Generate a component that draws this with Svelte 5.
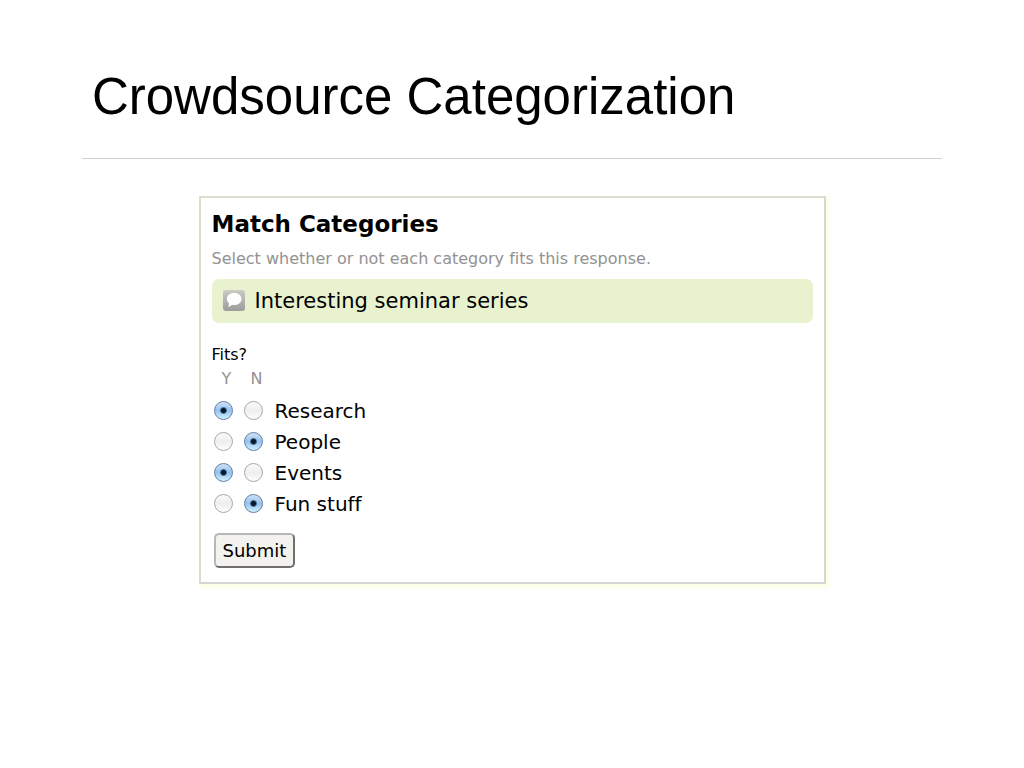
<script>
  let categories = $state([
    { name: 'Research', fits: 'yes' },
    { name: 'People', fits: 'no' },
    { name: 'Events', fits: 'yes' },
    { name: 'Fun stuff', fits: 'no' }
  ]);
</script>

<main>
  <header>
    <h1>Crowdsource Categorization</h1>
  </header>

  <form class="card" onsubmit={(event) => event.preventDefault()}>
    <h2>Match Categories</h2>
    <p class="hint">Select whether or not each category fits this response.</p>

    <div class="response">
      <svg class="bubble" viewBox="0 0 22 22" aria-hidden="true">
        <defs>
          <linearGradient id="tile" x1="0" y1="0" x2="0" y2="1">
            <stop offset="0" stop-color="#c9cbc4" />
            <stop offset="1" stop-color="#9c9c9c" />
          </linearGradient>
        </defs>
        <rect width="22" height="21" rx="3" fill="url(#tile)" />
        <path
          d="M11.200 3c4.300 0 7.300 2.600 7.300 6s-3 6-7.300 6c-.8 0-1.500-.1-2.200-.3-.9 1.200-2.300 1.900-4.100 2.100.9-1 1.200-2.200 1.200-3.500C4.700 12.200 3.900 10.700 3.900 9c0-3.400 3-6 7.300-6z"
          fill="#fff"
        />
      </svg>
      <span>Interesting seminar series</span>
    </div>

    <table>
      <caption>Fits?</caption>
      <thead>
        <tr>
          <th scope="col">Y</th>
          <th scope="col">N</th>
          <td></td>
        </tr>
      </thead>
      <tbody>
        {#each categories as category, i}
          <tr>
            <td>
              <input
                type="radio"
                name="category-{i}"
                value="yes"
                aria-label="{category.name}: yes"
                bind:group={category.fits}
              />
            </td>
            <td>
              <input
                type="radio"
                name="category-{i}"
                value="no"
                aria-label="{category.name}: no"
                bind:group={category.fits}
              />
            </td>
            <th scope="row">{category.name}</th>
          </tr>
        {/each}
      </tbody>
    </table>

    <button type="submit">Submit</button>
  </form>
</main>

<style>
  :global(body) {
    margin: 0;
    background: #fff;
  }

  main {
    padding: 65px 8% 48px;
    color: #000;
    font-family: Verdana, 'DejaVu Sans', sans-serif;
    font-variant-ligatures: none;
  }

  header {
    padding: 0 10px 29px;
    border-bottom: 1px solid #d0d0d0;
  }

  h1 {
    margin: 0;
    font: 400 51px/64px 'Liberation Sans', Arial, sans-serif;
  }

  .card {
    box-sizing: border-box;
    max-width: 627px;
    margin: 37px auto 0;
    padding: 11px 11px 14px;
    border: 2px solid #dcdecf;
    border-right-color: #d4d6d4;
    border-bottom-color: #d4d6d4;
    box-shadow: 2px 2px 0 2px #fdffe9;
  }

  h2 {
    margin: 0;
    font-size: 23px;
    line-height: 30px;
  }

  .hint {
    margin: 8px 0;
    color: #929292;
    font-size: 16px;
    line-height: 24px;
  }

  .response {
    display: flex;
    align-items: center;
    gap: 10px;
    padding: 8px 11px;
    border-radius: 7px;
    background: #e8f2cf;
    font-size: 21px;
    line-height: 28px;
  }

  .bubble {
    width: 22px;
    height: 22px;
  }

  table {
    margin-top: 20px;
    border-collapse: collapse;
  }

  caption {
    font-size: 16px;
    line-height: 24px;
    text-align: left;
  }

  th,
  td {
    padding: 0;
    font-weight: 400;
  }

  thead th {
    width: 30px;
    padding-bottom: 4px;
    color: #929292;
    font-size: 16px;
    line-height: 24px;
  }

  tbody tr {
    height: 31px;
  }

  tbody td {
    padding: 0 2px;
    line-height: 0;
  }

  tbody th {
    padding-left: 3px;
    font-size: 20px;
    line-height: 30px;
    text-align: left;
  }

  input {
    appearance: none;
    box-sizing: border-box;
    width: 19px;
    height: 19px;
    margin: 0;
    border: 1px solid #a9a9a9;
    border-radius: 50%;
    background: linear-gradient(#fbfbfb, #eeeeee 50%, #fdfdfd);
  }

  input:checked {
    border-color: #6d7f9f;
    background:
      radial-gradient(circle, #06182c 2px, transparent 4px),
      linear-gradient(#cfe2f7, #93c2f1 50%, #d0f0ff);
  }

  button {
    margin: 14px 0 0 2px;
    padding: 2px 7px;
    border: 2px solid;
    border-color: #b8b8b8 #707070 #707070 #b8b8b8;
    border-radius: 5px;
    background: #f4f2ee;
    color: #000;
    font-family: inherit;
    font-size: 18px;
    line-height: 27px;
  }
</style>
